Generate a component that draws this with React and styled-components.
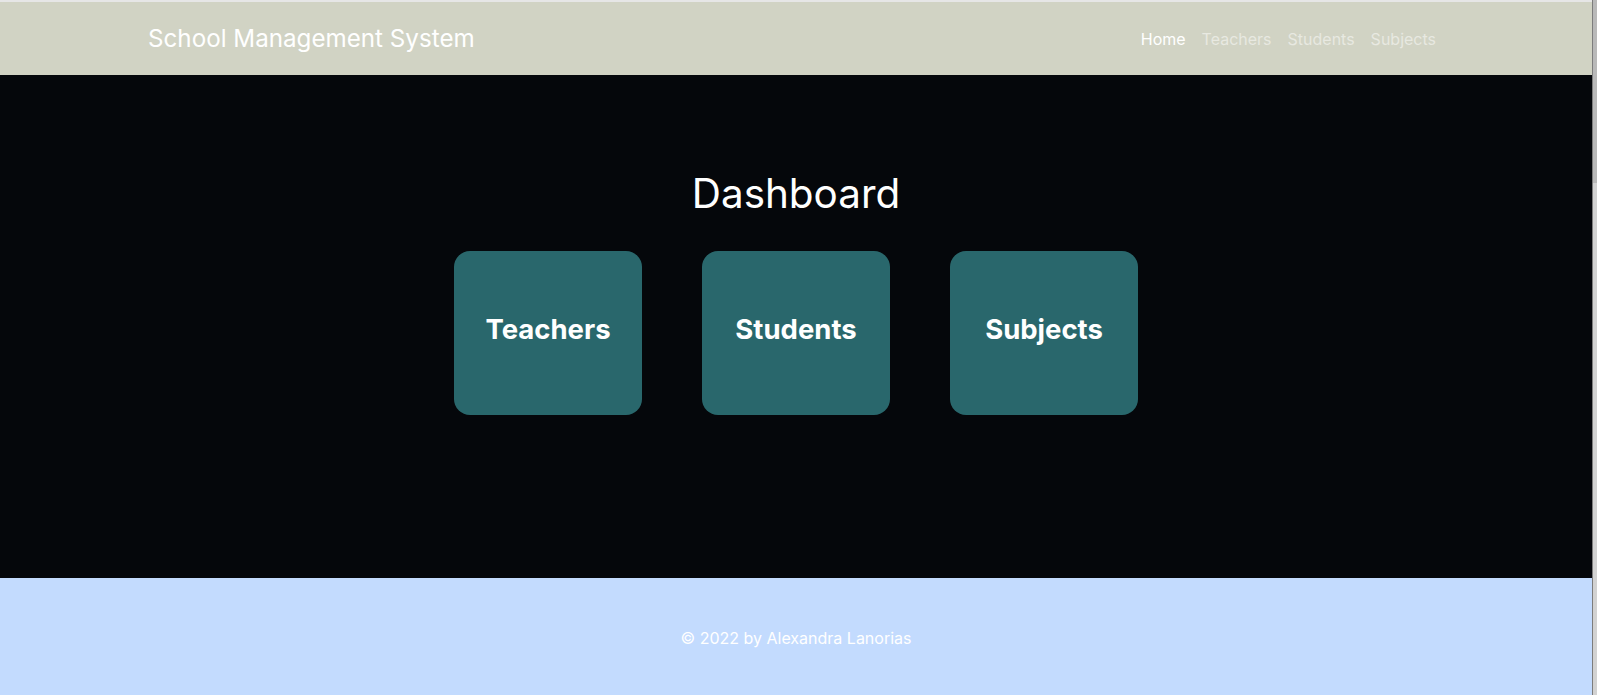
import React from 'react';
import styled, { createGlobalStyle } from 'styled-components';

const GlobalStyle = createGlobalStyle`
  html,
  body {
    margin: 0;
    padding: 0;
    height: 100%;
    overflow: hidden;
    background: #05070b;
    font-family: Inter, "Noto Sans", "Liberation Sans", sans-serif;
  }

  #root {
    height: 100%;
  }
`;

export const Shell = styled.div`
  display: flex;
  height: 100%;
`;

export const Page = styled.div`
  flex: 1;
  display: flex;
  flex-direction: column;
  border-top: 2px solid #e6e6e6;
`;

export const ScrollTrack = styled.div`
  width: 4px;
  flex-shrink: 0;
  border-left: 1px solid #7d7d7d;
  background: #d2d2d2;
  display: flex;
  flex-direction: column;
`;

export const ScrollThumb = styled.div`
  height: 183px;
  background: #b9b9b9;
`;

export const Navbar = styled.nav`
  background: #d1d3c4;
  height: 73px;
  display: flex;
  align-items: center;
`;

export const Container = styled.div`
  width: 1296px;
  margin: 0 auto;
  display: flex;
  align-items: center;
  justify-content: space-between;
`;

export const Brand = styled.a`
  color: #fff;
  font-size: 24.2px;
  text-decoration: none;
`;

export const NavLinks = styled.ul`
  display: flex;
  list-style: none;
  margin: 0;
  padding: 0;
`;

export const NavLink = styled.a`
  display: block;
  padding: 8px;
  font-size: 16px;
  line-height: 24px;
  text-decoration: none;
  color: ${props => (props.active ? '#fff' : 'rgba(255, 255, 255, 0.5)')};
`;

export const Main = styled.main`
  flex: 1;
  display: flex;
  flex-direction: column;
  align-items: center;
  padding-top: 95px;
`;

export const Title = styled.h1`
  margin: 0 0 33px;
  color: #fff;
  font-size: 40.4px;
  font-weight: 400;
  line-height: 48px;
`;

export const Cards = styled.div`
  display: flex;
  gap: 60px;
`;

export const Card = styled.a`
  width: 188px;
  height: 164px;
  box-sizing: border-box;
  padding-bottom: 8px;
  border-radius: 16px;
  background: #29676c;
  display: flex;
  align-items: center;
  justify-content: center;
  color: #fff;
  font-size: 27.5px;
  font-weight: 700;
  text-decoration: none;
`;

export const Footer = styled.footer`
  background: #c3dbfe;
  height: 117px;
  display: flex;
  align-items: center;
  justify-content: center;
  padding-top: 2px;
  box-sizing: border-box;
  color: #fff;
  font-size: 16px;
`;

const links = ['Home', 'Teachers', 'Students', 'Subjects'];
const sections = ['Teachers', 'Students', 'Subjects'];

export default function App() {
  return (
    <>
      <GlobalStyle />
      <Shell>
        <Page>
          <Navbar>
            <Container>
              <Brand href="#">School Management System</Brand>
              <NavLinks>
                {links.map((label, i) => (
                  <li key={label}>
                    <NavLink href="#" active={i === 0}>
                      {label}
                    </NavLink>
                  </li>
                ))}
              </NavLinks>
            </Container>
          </Navbar>
          <Main>
            <Title>Dashboard</Title>
            <Cards>
              {sections.map(label => (
                <Card key={label} href="#">
                  {label}
                </Card>
              ))}
            </Cards>
          </Main>
          <Footer>© 2022 by Alexandra Lanorias</Footer>
        </Page>
        <ScrollTrack>
          <ScrollThumb />
        </ScrollTrack>
      </Shell>
    </>
  );
}
